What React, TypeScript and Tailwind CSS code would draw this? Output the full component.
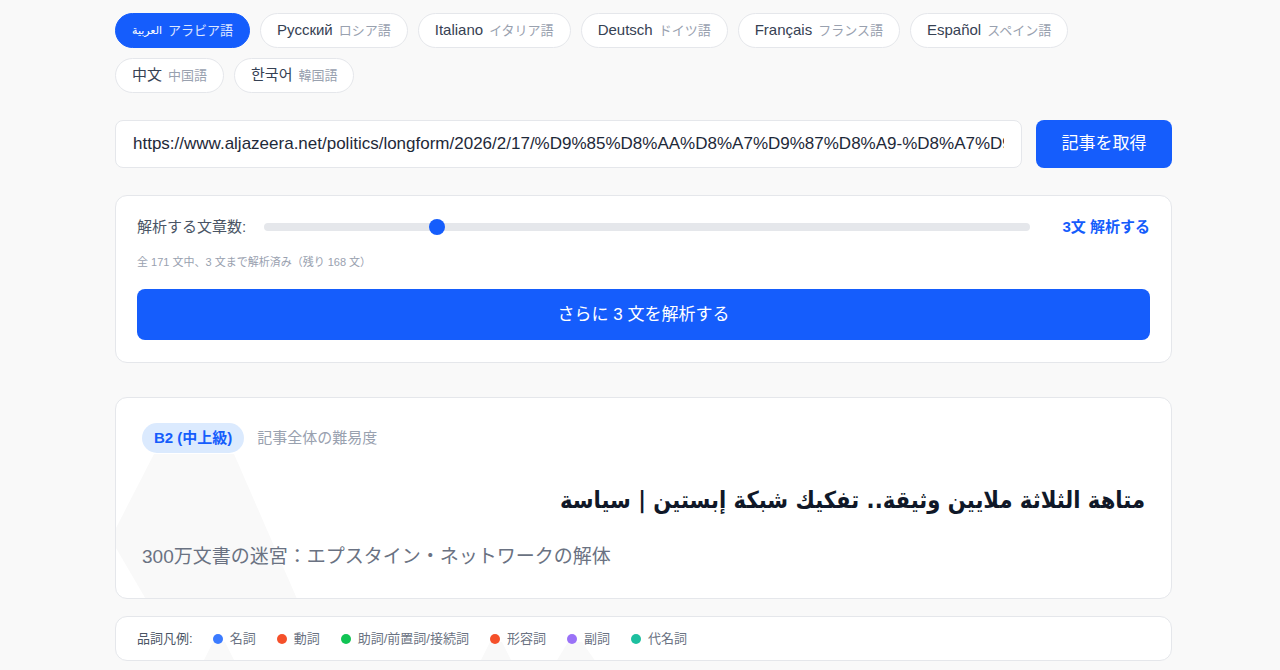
import { useState } from 'react';

const languages = [
  { name: 'العربية', ja: 'アラビア語' },
  { name: 'Русский', ja: 'ロシア語' },
  { name: 'Italiano', ja: 'イタリア語' },
  { name: 'Deutsch', ja: 'ドイツ語' },
  { name: 'Français', ja: 'フランス語' },
  { name: 'Español', ja: 'スペイン語' },
  { name: '中文', ja: '中国語' },
  { name: '한국어', ja: '韓国語' },
];

const legend = [
  { label: '名詞', color: 'bg-[#3b7bff]' },
  { label: '動詞', color: 'bg-[#f5502a]' },
  { label: '助詞/前置詞/接続詞', color: 'bg-[#10c454]' },
  { label: '形容詞', color: 'bg-[#f5502a]' },
  { label: '副詞', color: 'bg-[#9a72f7]' },
  { label: '代名詞', color: 'bg-[#1dbf9f]' },
];

const font = "font-['Liberation_Sans','Noto_Sans_CJK_JP','DejaVu_Sans',sans-serif]";

export default function App() {
  const [selected, setSelected] = useState(0);
  const [url, setUrl] = useState(
    'https://www.aljazeera.net/politics/longform/2026/2/17/%D9%85%D8%AA%D8%A7%D9%87%D8%A9-%D8%A7%D9%84%D8%AB%D9%84%D8%A7%D8%AB%D8%A9'
  );

  return (
    <div className={`min-h-screen bg-[#f9f9f9] ${font}`}>
      <div className="w-[1057px] ml-[115px] pt-[13px] pb-10">
        {/* 言語選択 */}
        <div className="flex flex-wrap gap-[10px] w-[980px]">
          {languages.map((lang, i) => (
            <button
              key={lang.name}
              onClick={() => setSelected(i)}
              className={
                i === selected
                  ? 'h-[35px] px-[16px] rounded-full bg-blue-600 border border-blue-600 flex items-center gap-[6px]'
                  : 'h-[35px] px-[16px] rounded-full bg-white border border-gray-200 flex items-center gap-[6px]'
              }
            >
              <span className={i === selected ? 'text-[11px] text-white' : 'text-[15px] text-gray-700'}>{lang.name}</span>
              <span className={i === selected ? 'text-[13px] text-white/85' : 'text-[13px] text-gray-400'}>{lang.ja}</span>
            </button>
          ))}
        </div>

        {/* URL入力 */}
        <div className="flex gap-[14px] mt-[27px]">
          <input
            value={url}
            onChange={(e) => setUrl(e.target.value)}
            className="flex-1 h-[48px] rounded-lg border border-gray-200 bg-white px-[17px] text-[17px] text-gray-800 outline-none"
          />
          <button className="w-[136px] h-[48px] rounded-lg bg-blue-600 text-white text-[17px]">記事を取得</button>
        </div>

        {/* 解析設定 */}
        <div className="mt-[27px] bg-white border border-gray-200 rounded-xl px-[21px] pt-[20px] pb-[22px]">
          <div className="flex items-center h-[22px]">
            <span className="text-[15px] text-gray-600">解析する文章数:</span>
            <div className="relative flex-1 h-2 ml-[18px] rounded-full bg-gray-200">
              <div className="absolute top-1/2 left-[22.6%] w-4 h-4 -ml-2 -mt-2 rounded-full bg-blue-600" />
            </div>
            <span className="ml-[32px] text-[15px] font-bold text-blue-600">3文 解析する</span>
          </div>
          <p className="mt-[16px] text-[11px] leading-[16px] text-gray-400">全 171 文中、3 文まで解析済み（残り 168 文）</p>
          <button className="mt-[19px] w-full h-[51px] rounded-lg bg-blue-600 text-white text-[17px]">
            さらに 3 文を解析する
          </button>
        </div>

        {/* 記事 */}
        <div className="relative overflow-hidden mt-[34px] bg-white border border-gray-200 rounded-xl px-[26px] pt-[25px] pb-[27px]">
          <svg className="absolute left-0 top-0 pointer-events-none" width="220" height="210">
            <polygon points="38,56 118,56 185,210 35,210 0,150 0,130" fill="#f9f9f9" />
          </svg>
          <div className="relative flex items-center gap-[13px]">
            <span className="h-[30px] px-[12px] rounded-full bg-blue-100 text-blue-600 text-[15px] font-bold flex items-center">
              B2 (中上級)
            </span>
            <span className="text-[15px] text-gray-400">記事全体の難易度</span>
          </div>
          <h1
            dir="rtl"
            className="relative mt-[29px] text-[23.5px] leading-[36px] font-bold text-gray-900 font-['DejaVu_Sans_Condensed','DejaVu_Sans',sans-serif]"
          >
            متاهة الثلاثة ملايين وثيقة.. تفكيك شبكة إبستين | سياسة
          </h1>
          <p className="relative mt-[25px] text-[19px] leading-[28px] text-gray-500">
            300万文書の迷宮：エプスタイン・ネットワークの解体
          </p>
        </div>

        {/* 品詞凡例 */}
        <div className="relative overflow-hidden mt-[17px] h-[45px] bg-white border border-gray-200 rounded-xl px-[21px] flex items-center">
          <svg className="absolute left-0 top-0 pointer-events-none" width="600" height="45">
            <polygon points="97,25 109,25 119,45 87,45" fill="#f9f9f9" />
            <polygon points="374,25 386,25 396,45 364,45" fill="#f9f9f9" />
            <polygon points="452,25 466,25 480,45 440,45" fill="#f9f9f9" />
          </svg>
          <span className="relative text-[13px] text-gray-600 mr-[20px]">品詞凡例:</span>
          <div className="relative flex items-center gap-[21px]">
            {legend.map((item) => (
              <div key={item.label} className="flex items-center gap-[7px]">
                <span className={`w-[10px] h-[10px] rounded-full ${item.color}`} />
                <span className="text-[13px] text-gray-500">{item.label}</span>
              </div>
            ))}
          </div>
        </div>
      </div>
    </div>
  );
}
